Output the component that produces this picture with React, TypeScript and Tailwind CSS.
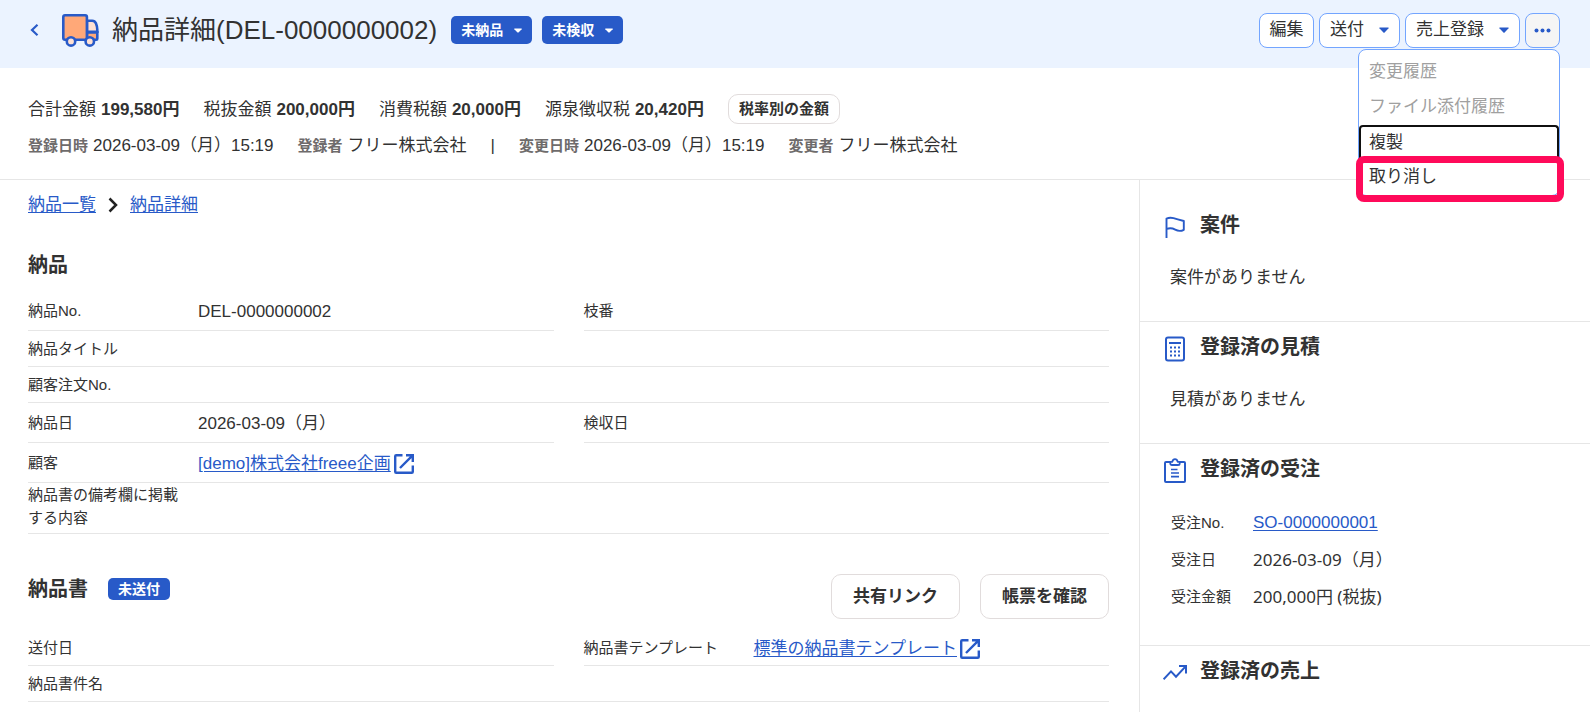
import type { ReactNode } from 'react';

type Tone = 'plain' | 'link';

interface Field {
  label: string;
  value?: string;
  tone?: Tone;
}

const totals = [
  { label: '合計金額', value: '199,580円' },
  { label: '税抜金額', value: '200,000円' },
  { label: '消費税額', value: '20,000円' },
  { label: '源泉徴収税', value: '20,420円' },
];

const menuItems = [
  { label: '変更履歴', disabled: true },
  { label: 'ファイル添付履歴', disabled: true },
  { label: '複製', disabled: false },
  { label: '取り消し', disabled: false },
];

const deliveryRows: { height: string; fields: Field[] }[] = [
  { height: 'h-10', fields: [{ label: '納品No.', value: 'DEL-0000000002' }, { label: '枝番' }] },
  { height: 'h-9', fields: [{ label: '納品タイトル' }] },
  { height: 'h-9', fields: [{ label: '顧客注文No.' }] },
  { height: 'h-10', fields: [{ label: '納品日', value: '2026-03-09（月）' }, { label: '検収日' }] },
  { height: 'h-10', fields: [{ label: '顧客', value: '[demo]株式会社freee企画', tone: 'link' }] },
  { height: 'h-[51px] pb-1', fields: [{ label: '納品書の備考欄に掲載する内容' }] },
];

const documentRows: { height: string; fields: Field[] }[] = [
  {
    height: 'h-9',
    fields: [{ label: '送付日' }, { label: '納品書テンプレート', value: '標準の納品書テンプレート', tone: 'link' }],
  },
  { height: 'h-9', fields: [{ label: '納品書件名' }] },
];

function Caret({ className }: { className: string }) {
  return (
    <svg viewBox="0 0 10 6" className={className} fill="currentColor" aria-hidden="true">
      <path d="M0.6 0.4h8.8q.6 .4 .2 .9L5.6 5.4q-.6 .5 -1.2 0L.4 1.3Q0 .8 .6 .4Z" />
    </svg>
  );
}

function TruckIcon() {
  return (
    <svg viewBox="0 0 37 33" className="h-[33px] w-[37px] shrink-0" strokeWidth="2.6" stroke="#285ac8" aria-hidden="true">
      <path d="M25 6.8h5.200q2.600 0 3.800 2.600 1.300 3 1.300 6.400v2H25Z" fill="#ffe0d2" />
      <path d="M25 18.400h10.300v6.400q0 1-1 1H25Z" fill="#ffa878" />
      <path d="M3 1.300h20.200q1.700 0 1.700 1.700v22.800H3q-1.700 0-1.700-1.700V3q0-1.700 1.700-1.700Z" fill="#ffa878" />
      <circle cx="9" cy="27.400" r="4.200" fill="#ffe0d2" />
      <circle cx="27.800" cy="27.400" r="4.200" fill="#ffe0d2" />
    </svg>
  );
}

function ExternalIcon() {
  return (
    <svg viewBox="0 0 20 20" className="ml-[3px] size-5 shrink-0" fill="none" stroke="#285ac8" strokeWidth="2.400" aria-hidden="true">
      <path d="M8.500 1.200H2.200q-1 0-1 1v15.600q0 1 1 1h15.600q1 0 1-1V11.500" />
      <path d="M12 1.200h6.800V8M18.600 1.400 6 14" />
    </svg>
  );
}

function FlagIcon() {
  return (
    <svg viewBox="0 0 24 24" className="size-6" fill="none" stroke="#285ac8" strokeWidth="1.900" strokeLinejoin="round" aria-hidden="true">
      <path d="M3.500 23V3.600Q7 2 10.500 3.200T20.800 6v8.800Q16.600 17 12.200 14.600 8 12.400 3.500 14" />
    </svg>
  );
}

function CalculatorIcon() {
  return (
    <svg viewBox="0 0 24 26" className="h-[26px] w-6" fill="none" stroke="#285ac8" strokeWidth="2" aria-hidden="true">
      <rect x="3" y="1.500" width="18" height="23" rx="2" />
      <path d="M6 7h12" />
      <path d="M7 11.500h2M11 11.500h2M15 11.500h2M7 15.500h2M11 15.500h2M15 15.500h2M7 19.500h2M11 19.500h2M15 19.500h2" />
    </svg>
  );
}

function ClipboardIcon() {
  return (
    <svg viewBox="0 0 24 26" className="h-[26px] w-6" fill="none" stroke="#285ac8" strokeWidth="2" strokeLinejoin="round" aria-hidden="true">
      <path d="M7 4H3q-1 0-1 1v18q0 1 1 1h18q1 0 1-1V5q0-1-1-1h-4" />
      <path d="M7.300 3.800h2Q10 1.200 12 1.200t2.700 2.600h2v1.600q0 1.600-1.700 1.600H9q-1.700 0-1.700-1.600Z" strokeWidth="1.800" />
      <path d="M8 11.500h6.500M8 15h8M8 18.600h8" strokeWidth="1.700" />
    </svg>
  );
}

function TrendIcon() {
  return (
    <svg viewBox="0 0 24 24" className="size-6" fill="none" stroke="#285ac8" strokeWidth="2" aria-hidden="true">
      <path d="M.6 18.400 8 10.400l5 5.400L22.400 5.600" />
      <path d="M16 5h7v7.400" />
    </svg>
  );
}

function FieldTable({ rows }: { rows: { height: string; fields: Field[] }[] }) {
  return (
    <dl>
      {rows.map((row) => (
        <div
          key={row.fields[0].label}
          className={row.fields.length > 1 ? 'grid grid-cols-2 gap-x-[30px]' : 'grid grid-cols-1'}
        >
          {row.fields.map((field) => (
            <div key={field.label} className={`flex items-center border-b border-[#e6e6e6] ${row.height}`}>
              <dt className="w-[170px] shrink-0 pr-4 text-[15px] leading-[23px]">{field.label}</dt>
              <dd className="flex items-center pt-0.5 text-[17px] leading-6">
                {field.tone === 'link' ? (
                  <>
                    <a href="#" className="text-[#285ac8] underline underline-offset-2">{field.value}</a>
                    <ExternalIcon />
                  </>
                ) : (
                  field.value
                )}
              </dd>
            </div>
          ))}
        </div>
      ))}
    </dl>
  );
}

function SideSection({ icon, title, className, children }: { icon: ReactNode; title: string; className: string; children?: ReactNode }) {
  return (
    <section className={`pl-[23px] ${className}`}>
      <h2 className="flex items-center gap-[13px] text-[20px] leading-[30px] font-bold">
        <span className="flex pt-1">{icon}</span>
        {title}
      </h2>
      {children}
    </section>
  );
}

function StatusButton({ label }: { label: string }) {
  return (
    <button type="button" className="flex h-7 items-center gap-[11px] rounded-[5px] bg-[#285ac8] px-[10px] text-[14px] leading-5 font-bold text-white">
      {label}
      <Caret className="h-[5px] w-2" />
    </button>
  );
}

const headerButton = 'flex h-[35px] items-center rounded-lg border border-[#73a5ff] text-[17px] leading-6';

export default function App() {
  return (
    <div className="flex min-h-screen flex-col bg-white pr-0.5 font-['Liberation_Sans','Noto_Sans_CJK_JP',sans-serif] text-[#323232]">
      <header className="flex h-[68px] items-center bg-[#ebf3ff] pr-[30px] pb-2 pl-[30px]">
        <a href="#" aria-label="戻る" className="text-[#285ac8]">
          <svg viewBox="0 0 9 12" className="h-3 w-[9px]" fill="none" stroke="currentColor" strokeWidth="2.200" aria-hidden="true">
            <path d="M7.500 .8 2 6l5.500 5.200" />
          </svg>
        </a>
        <div className="ml-[23px] flex"><TruckIcon /></div>
        <h1 className="ml-[13px] text-[26px] leading-9 whitespace-nowrap">納品詳細(DEL-0000000002)</h1>
        <div className="ml-[14px] flex gap-[10px]">
          <StatusButton label="未納品" />
          <StatusButton label="未検収" />
        </div>

        <div className="relative ml-auto flex gap-[5px]">
          <button type="button" className={`${headerButton} w-[55px] justify-center bg-white`}>編集</button>
          <button type="button" className={`${headerButton} gap-[15px] bg-white px-[10px]`}>
            送付
            <Caret className="h-1.5 w-[10px] text-[#285ac8]" />
          </button>
          <button type="button" className={`${headerButton} gap-[15px] bg-white px-[10px]`}>
            売上登録
            <Caret className="h-1.5 w-[10px] text-[#285ac8]" />
          </button>
          <button type="button" aria-label="その他" className={`${headerButton} w-[35px] justify-center bg-[#f5f5f5] text-[#285ac8]`}>
            <svg viewBox="0 0 17 5" className="h-[5px] w-[17px]" fill="currentColor" aria-hidden="true">
              <circle cx="2.500" cy="2.500" r="2" />
              <circle cx="8.500" cy="2.500" r="2" />
              <circle cx="14.500" cy="2.500" r="2" />
            </svg>
          </button>

          <ul className="absolute top-9 right-0 w-[202px] rounded-lg border border-[#73a5ff] bg-white pt-[5px]">
            {menuItems.map((item) => (
              <li key={item.label}>
                <button
                  type="button"
                  disabled={item.disabled}
                  className={`flex h-[35px] w-full items-center text-left text-[17px] leading-6 disabled:text-[#a0a0a0] ${
                    item.label === '複製' ? 'rounded-t border-2 border-b-0 border-[#101010] px-2' : 'px-[10px]'
                  }`}
                >
                  {item.label}
                </button>
              </li>
            ))}
            {/* highlight around the cancel action */}
            <li aria-hidden="true" className="pointer-events-none absolute -right-[5px] -bottom-[7px] -left-[3px] h-[46px] rounded-lg border-[7px] border-[#ff0a5a]" />
          </ul>
        </div>
      </header>

      <section className="border-b border-[#e6e6e6] px-7 pt-[25px] pb-5">
        <div className="flex items-center gap-6 text-[17px] leading-[30px]">
          {totals.map((t) => (
            <div key={t.label} className="flex gap-[5px] pt-0.5">
              <span>{t.label}</span>
              <b>{t.value}</b>
            </div>
          ))}
          <button type="button" className="h-[30px] rounded-[10px] border border-[#e1dcdc] px-[10px] text-[15px] leading-5 font-bold">
            税率別の金額
          </button>
        </div>
        <div className="mt-2 flex items-center gap-6 text-[17px] leading-[26px]">
          <div className="flex gap-[5px]"><b className="text-[15px] text-[#6e6b6b]">登録日時</b>2026-03-09（月）15:19</div>
          <div className="flex gap-[5px]"><b className="text-[15px] text-[#6e6b6b]">登録者</b>フリー株式会社</div>
          <span>|</span>
          <div className="flex gap-[5px]"><b className="text-[15px] text-[#6e6b6b]">変更日時</b>2026-03-09（月）15:19</div>
          <div className="flex gap-[5px]"><b className="text-[15px] text-[#6e6b6b]">変更者</b>フリー株式会社</div>
        </div>
      </section>

      <div className="flex flex-1">
        <main className="min-w-0 flex-1 pr-[30px] pl-7">
          <nav className="flex items-center gap-3 pt-3 text-[17px] leading-[26px]">
            <a href="#" className="text-[#285ac8] underline underline-offset-2">納品一覧</a>
            <svg viewBox="0 0 10 16" className="h-4 w-[10px]" fill="none" stroke="#222" strokeWidth="2.500" aria-hidden="true">
              <path d="M1.500 1.500 8 8l-6.500 6.500" />
            </svg>
            <a href="#" className="text-[#285ac8] underline underline-offset-2">納品詳細</a>
          </nav>

          <h2 className="mt-8 mb-[11px] text-[20px] leading-[30px] font-bold">納品</h2>
          <FieldTable rows={deliveryRows} />

          <div className="mt-10 mb-[11px] flex items-start justify-between">
            <div className="flex items-center gap-5">
              <h2 className="text-[20px] leading-[30px] font-bold">納品書</h2>
              <span className="rounded-[5px] bg-[#285ac8] px-[10px] text-[14px] leading-[22px] font-bold text-white">未送付</span>
            </div>
            <div className="flex gap-5">
              <button type="button" className="h-[45px] rounded-[10px] border border-[#e1dcdc] px-[21px] text-[17px] leading-6 font-bold">共有リンク</button>
              <button type="button" className="h-[45px] rounded-[10px] border border-[#e1dcdc] px-[21px] text-[17px] leading-6 font-bold">帳票を確認</button>
            </div>
          </div>
          <FieldTable rows={documentRows} />
        </main>

        <aside className="w-[451px] shrink-0 border-l border-[#e6e6e6]">
          <SideSection icon={<FlagIcon />} title="案件" className="h-[142px] border-b border-[#e6e6e6] pt-[30px]">
            <p className="mt-[25px] pl-[7px] text-[17px] leading-[26px]">案件がありません</p>
          </SideSection>
          <SideSection icon={<CalculatorIcon />} title="登録済の見積" className="h-[122px] border-b border-[#e6e6e6] pt-[10px]">
            <p className="mt-[25px] pl-[7px] text-[17px] leading-[26px]">見積がありません</p>
          </SideSection>
          <SideSection icon={<ClipboardIcon />} title="登録済の受注" className="h-[202px] border-b border-[#e6e6e6] pt-[10px]">
            <dl className="mt-5 grid grid-cols-[82px_1fr] pl-2 text-[17px] leading-[37px]">
              <dt className="text-[15px]">受注No.</dt>
              <dd><a href="#" className="text-[#285ac8] underline underline-offset-2">SO-0000000001</a></dd>
              <dt className="text-[15px]">受注日</dt>
              <dd className="font-['Noto_Sans','Noto_Sans_CJK_JP',sans-serif]">2026-03-09（月）</dd>
              <dt className="text-[15px]">受注金額</dt>
              <dd className="font-['Noto_Sans','Noto_Sans_CJK_JP',sans-serif]">200,000円 (税抜)</dd>
            </dl>
          </SideSection>
          <SideSection icon={<TrendIcon />} title="登録済の売上" className="pt-[10px]" />
        </aside>
      </div>
    </div>
  );
}
